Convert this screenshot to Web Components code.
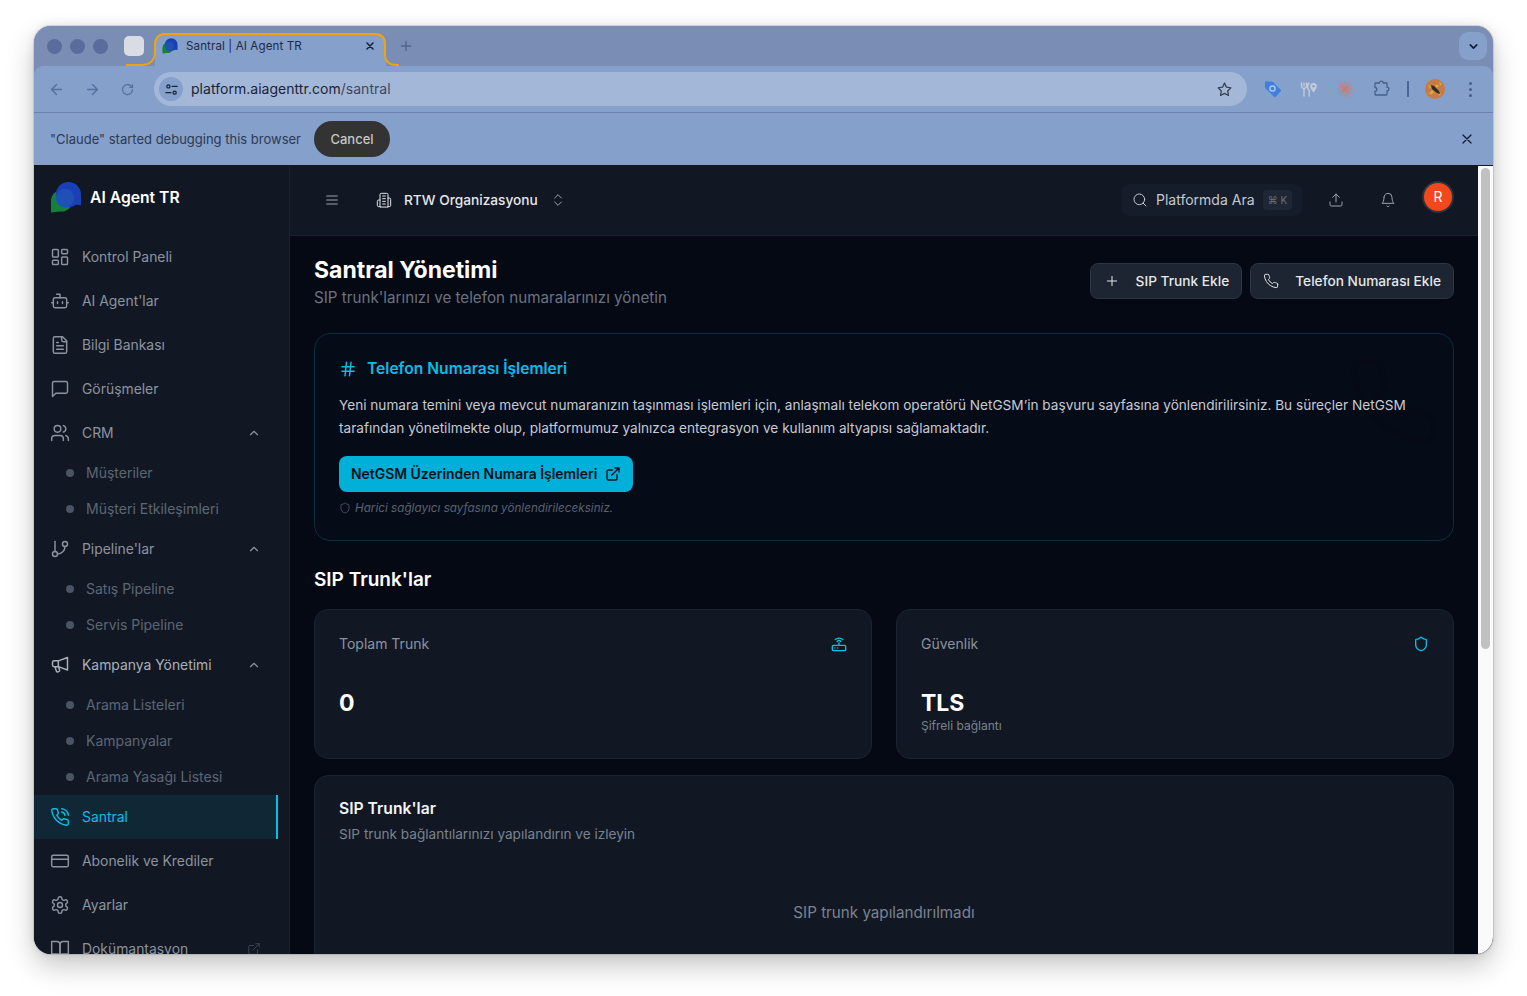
<!DOCTYPE html>
<html lang="tr">
<head>
<meta charset="utf-8">
<title>Santral | AI Agent TR</title>
<style>
    html, body { margin: 0; height: 100%; background: #fff; overflow: hidden; }
    body { padding: 26px 34px 42px; box-sizing: border-box; font-family: Inter, "Liberation Sans", sans-serif; }
</style>
</head>
<body>
<browser-window>
    <browser-tabs></browser-tabs>
    <browser-toolbar></browser-toolbar>
    <debug-bar></debug-bar>
    <app-shell>
        <app-sidebar slot="side">
            <nav-item icon="dashboard">Kontrol Paneli</nav-item>
            <nav-item icon="bot">AI Agent'lar</nav-item>
            <nav-item icon="file">Bilgi Bankası</nav-item>
            <nav-item icon="message">Görüşmeler</nav-item>
            <nav-item icon="users" trail="chevron">CRM</nav-item>
            <sub-item>Müşteriler</sub-item>
            <sub-item>Müşteri Etkileşimleri</sub-item>
            <nav-item icon="branch" trail="chevron">Pipeline'lar</nav-item>
            <sub-item>Satış Pipeline</sub-item>
            <sub-item>Servis Pipeline</sub-item>
            <nav-item icon="megaphone" trail="chevron" hover>Kampanya Yönetimi</nav-item>
            <sub-item>Arama Listeleri</sub-item>
            <sub-item>Kampanyalar</sub-item>
            <sub-item>Arama Yasağı Listesi</sub-item>
            <nav-item icon="phonecall" active>Santral</nav-item>
            <nav-item icon="card">Abonelik ve Krediler</nav-item>
            <nav-item icon="gear">Ayarlar</nav-item>
            <nav-item icon="book" trail="external">Dokümantasyon</nav-item>
        </app-sidebar>
        <app-header slot="head"></app-header>
        <santral-page></santral-page>
    </app-shell>
</browser-window>

<script>
// lucide style strokes, keyed by name
const ICONS = {
    dashboard: '<rect x="3" y="3" width="7" height="9" rx="1"/><rect x="14" y="3" width="7" height="5" rx="1"/><rect x="14" y="12" width="7" height="9" rx="1"/><rect x="3" y="16" width="7" height="5" rx="1"/>',
    bot: '<path d="M12 8V4H8"/><rect width="16" height="12" x="4" y="8" rx="2"/><path d="M2 14h2M20 14h2M15 13v2M9 13v2"/>',
    file: '<path d="M15 2H6a2 2 0 0 0-2 2v16a2 2 0 0 0 2 2h12a2 2 0 0 0 2-2V7Z"/><path d="M14 2v4a2 2 0 0 0 2 2h4"/><path d="M10 9H8M16 13H8M16 17H8"/>',
    message: '<path d="M21 15a2 2 0 0 1-2 2H7l-4 4V5a2 2 0 0 1 2-2h14a2 2 0 0 1 2 2z"/>',
    users: '<path d="M16 21v-2a4 4 0 0 0-4-4H6a4 4 0 0 0-4 4v2"/><circle cx="9" cy="7" r="4"/><path d="M22 21v-2a4 4 0 0 0-3-3.87M16 3.13a4 4 0 0 1 0 7.75"/>',
    branch: '<path d="M6 3v12"/><circle cx="18" cy="6" r="3"/><circle cx="6" cy="18" r="3"/><path d="M18 9a9 9 0 0 1-9 9"/>',
    megaphone: '<path d="M21 3 10 7H5a2 2 0 0 0-2 2v3a2 2 0 0 0 2 2h5l11 4z"/><path d="M10 7v7"/><path d="m6 14 1.6 5.2a1.5 1.5 0 0 0 1.9 1l1-.3a1.5 1.5 0 0 0 1-1.9L10.500 15"/>',
    phonecall: '<path d="M22 16.920v3a2 2 0 0 1-2.180 2 19.790 19.790 0 0 1-8.630-3.070 19.500 19.500 0 0 1-6-6 19.790 19.790 0 0 1-3.070-8.670A2 2 0 0 1 4.110 2h3a2 2 0 0 1 2 1.720 12.840 12.840 0 0 0 .7 2.810 2 2 0 0 1-.45 2.110L8.090 9.910a16 16 0 0 0 6 6l1.270-1.270a2 2 0 0 1 2.110-.45 12.840 12.840 0 0 0 2.810.7A2 2 0 0 1 22 16.920z"/><path d="M14.050 2a9 9 0 0 1 8 7.940M14.050 6A5 5 0 0 1 18 10"/>',
    phone: '<path d="M22 16.920v3a2 2 0 0 1-2.180 2 19.790 19.790 0 0 1-8.630-3.070 19.500 19.500 0 0 1-6-6 19.790 19.790 0 0 1-3.070-8.670A2 2 0 0 1 4.110 2h3a2 2 0 0 1 2 1.720 12.840 12.840 0 0 0 .7 2.810 2 2 0 0 1-.45 2.110L8.090 9.910a16 16 0 0 0 6 6l1.270-1.270a2 2 0 0 1 2.110-.45 12.840 12.840 0 0 0 2.810.7A2 2 0 0 1 22 16.92z"/>',
    card: '<rect width="20" height="14" x="2" y="5" rx="2"/><path d="M2 10h20"/>',
    gear: '<path d="M12.220 2h-.44a2 2 0 0 0-2 2v.18a2 2 0 0 1-1 1.730l-.43.25a2 2 0 0 1-2 0l-.15-.08a2 2 0 0 0-2.730.73l-.22.38a2 2 0 0 0 .73 2.730l.15.1a2 2 0 0 1 1 1.720v.51a2 2 0 0 1-1 1.740l-.15.09a2 2 0 0 0-.73 2.730l.22.38a2 2 0 0 0 2.730.73l.15-.08a2 2 0 0 1 2 0l.43.25a2 2 0 0 1 1 1.730V20a2 2 0 0 0 2 2h.44a2 2 0 0 0 2-2v-.18a2 2 0 0 1 1-1.730l.43-.25a2 2 0 0 1 2 0l.15.08a2 2 0 0 0 2.730-.73l.22-.39a2 2 0 0 0-.73-2.730l-.15-.08a2 2 0 0 1-1-1.740v-.5a2 2 0 0 1 1-1.740l.15-.09a2 2 0 0 0 .73-2.730l-.22-.38a2 2 0 0 0-2.730-.73l-.15.08a2 2 0 0 1-2 0l-.43-.25a2 2 0 0 1-1-1.730V4a2 2 0 0 0-2-2z"/><circle cx="12" cy="12" r="3"/>',
    book: '<path d="M2 3h6a4 4 0 0 1 4 4v14a3 3 0 0 0-3-3H2z"/><path d="M22 3h-6a4 4 0 0 0-4 4v14a3 3 0 0 1 3-3h7z"/>',
    external: '<path d="M15 3h6v6M10 14 21 3"/><path d="M18 13v6a2 2 0 0 1-2 2H5a2 2 0 0 1-2-2V8a2 2 0 0 1 2-2h6"/>',
    chevron: '<path d="m18 15-6-6-6 6"/>',
    updown: '<path d="m7 15 5 5 5-5M7 9l5-5 5 5"/>',
    menu: '<path d="M4 6h16M4 12h16M4 18h16"/>',
    building: '<path d="M6 22V4a2 2 0 0 1 2-2h8a2 2 0 0 1 2 2v18Z"/><path d="M6 12H4a2 2 0 0 0-2 2v6a2 2 0 0 0 2 2h2M18 9h2a2 2 0 0 1 2 2v9a2 2 0 0 1-2 2h-2M10 6h4M10 10h4M10 14h4M10 18h4"/>',
    search: '<circle cx="11" cy="11" r="8"/><path d="m21 21-4.300-4.300"/>',
    upload: '<path d="M21 15v4a2 2 0 0 1-2 2H5a2 2 0 0 1-2-2v-4"/><path d="m17 8-5-5-5 5M12 3v12"/>',
    bell: '<path d="M6 8a6 6 0 0 1 12 0c0 7 3 9 3 9H3s3-2 3-9"/><path d="M10.300 21a1.940 1.940 0 0 0 3.400 0"/>',
    hash: '<path d="M4 9h16M4 15h16M10 3 8 21M16 3l-2 18"/>',
    plus: '<path d="M5 12h14M12 5v14"/>',
    shield: '<path d="M20 13c0 5-3.500 7.500-7.660 8.950a1 1 0 0 1-.67-.01C7.500 20.500 4 18 4 13V6a1 1 0 0 1 1-1c2 0 4.500-1.200 6.240-2.720a1.170 1.170 0 0 1 1.520 0C14.510 3.810 17 5 19 5a1 1 0 0 1 1 1z"/>',
    router: '<rect x="2" y="14" width="20" height="8" rx="1.500"/><path d="M6 18h.01M10 18h.01M12 10v4"/><path d="M9.200 8.200a4 4 0 0 1 5.600 0M6.400 5.400a8 8 0 0 1 11.200 0"/>',
    close: '<path d="M18 6 6 18M6 6l12 12"/>',
    back: '<path d="m12 19-7-7 7-7M19 12H5"/>',
    forward: '<path d="M5 12h14M12 5l7 7-7 7"/>',
    reload: '<path d="M20 12a8 8 0 1 1-2.400-5.700L20 8.500"/><path d="M20 4v4.500h-4.500"/>',
    star: '<path d="m12 3 2.800 5.800 6.200.9-4.500 4.400 1.100 6.300L12 17.400l-5.600 3 1.100-6.300L3 9.700l6.200-.9z"/>',
    tune: '<circle cx="7" cy="7" r="2.500"/><path d="M13 7h8M3 17h8"/><circle cx="17" cy="17" r="2.500"/>',
    puzzle: '<path d="M5 4h5a2.500 2.500 0 0 1 5 0h4a1 1 0 0 1 1 1v4.500a2.500 2.500 0 0 1 0 5V19a1 1 0 0 1-1 1H5a1 1 0 0 1-1-1v-4a2.500 2.500 0 0 0 0-5V5a1 1 0 0 1 1-1z"/>'
};

class UiIcon extends HTMLElement {
    connectedCallback() {
        const size = this.getAttribute('size') || 20;
        const w = this.getAttribute('stroke') || 1.5;
        this.attachShadow({mode: 'open'}).innerHTML = `
            <style>:host{display:inline-flex;flex:none;width:${size}px;height:${size}px} svg{display:block}</style>
            <svg width="${size}" height="${size}" viewBox="0 0 24 24" fill="none" stroke="currentColor" stroke-width="${w}" stroke-linecap="round" stroke-linejoin="round">${ICONS[this.getAttribute('name')] || ''}</svg>`;
    }
}
customElements.define('ui-icon', UiIcon);

const BUBBLES = `<circle cx="12" cy="20" r="11" fill="#14803c"/><path d="M1 21v11l9-1z" fill="#14803c"/><circle cx="19" cy="13.500" r="13" fill="#1b3fb4"/><path d="M32 15v9.500l-9-1z" fill="#1b3fb4"/><circle cx="15.500" cy="17" r="9.500" fill="#1f50b8"/>`;

class BrowserWindow extends HTMLElement {
    connectedCallback() {
        this.attachShadow({mode: 'open'}).innerHTML = `
            <style>
                :host { display: flex; flex-direction: column; height: 928px; border-radius: 17px; overflow: hidden;
                        background: #7a8db5; box-shadow: 0 0 0 1px rgba(0,0,0,.10), 0 12px 28px rgba(0,0,0,.22), 0 0 10px rgba(0,0,0,.10); }
            </style>
            <slot></slot>`;
    }
}

class BrowserTabs extends HTMLElement {
    connectedCallback() {
        this.attachShadow({mode: 'open'}).innerHTML = `
            <style>
                :host { display: flex; align-items: center; height: 40px; background: #7a8db5; padding-left: 13px; padding-right: 6px; flex: none; font-size: 11.600px; }
                .lights { display: flex; gap: 8px; }
                .lights i { width: 15px; height: 15px; border-radius: 50%; background: #5a6c9c; }
                .blank { width: 20px; height: 20px; border-radius: 5px; background: #d9dce2; margin-left: 16px; }
                .tab { position: relative; align-self: flex-end; width: 231px; height: 33px; margin-left: 11px; background: #84a0cb; border-radius: 9px 9px 0 0;
                       display: flex; align-items: center; box-sizing: border-box; padding: 0 10px 7px 7px; color: #1f2b45; }
                .tab svg.line { position: absolute; left: -29px; top: 0; overflow: visible; }
                .tab span { flex: 1; margin-left: 8px; margin-bottom: 1px; white-space: nowrap; letter-spacing: .1px; }
                .tab ui-icon { color: #16223b; }
                .plus { color: #51648f; margin-left: 12px; }
                .menu { margin-left: auto; width: 28px; height: 28px; border-radius: 9px; background: #84a0cb; display: flex; align-items: center; justify-content: center; color: #121c33; }
            </style>
            <div class="lights"><i></i><i></i><i></i></div>
            <div class="blank"></div>
            <div class="tab">
                <svg class="line" width="273" height="33" fill="none" stroke="#f2a20c" stroke-width="2"><path d="M0 32h15c9 0 14-5 14-13V11C29 5 33 1 39 1h210c6 0 10 4 10 10v10c0 7 4 11 12 11h2"/></svg>
                <svg width="16" height="16" viewBox="0 0 33 33" style="flex:none">${BUBBLES}</svg>
                <span>Santral | AI Agent TR</span>
                <ui-icon name="close" size="12" stroke="3"></ui-icon>
            </div>
            <ui-icon class="plus" name="plus" size="16" stroke="2"></ui-icon>
            <div class="menu"><ui-icon name="chevron" size="13" stroke="3" style="transform:rotate(180deg)"></ui-icon></div>`;
    }
}

class BrowserToolbar extends HTMLElement {
    connectedCallback() {
        this.attachShadow({mode: 'open'}).innerHTML = `
            <style>
                :host { display: flex; align-items: center; height: 46px; flex: none; background: #84a0cb; border-radius: 9px 9px 0 0; border-bottom: 1px solid #6a82ac; padding-left: 14px; color: #56709f; }
                .nav { display: flex; gap: 19px; align-items: center; }
                .omni { display: flex; align-items: center; width: 1093px; height: 34px; margin-left: 19px; border-radius: 17px; background: #a3b7d9; box-sizing: border-box; padding: 0 14px 0 5px; color: #1b2435; font-size: 14px; letter-spacing: .03px; }
                .omni span { margin-bottom: 2px; }
                .site { width: 24px; height: 24px; border-radius: 50%; background: #84a0cb; display: flex; align-items: center; justify-content: center; margin-right: 8px; color: #1b2435; }
                .omni em { font-style: normal; color: #3b4861; }
                .omni ui-icon.star { margin-left: auto; color: #3a3f4c; }
                .exts { display: flex; align-items: center; margin-left: 17px; }
                .exts svg.e { margin-right: 18px; flex: none; }
                .sep { width: 2px; height: 16px; background: #4a669b; margin-left: 17px; }
                .avatar { margin-left: 16px; flex: none; display: block; }
                .kebab { margin-left: 24px; display: flex; flex-direction: column; gap: 3px; }
                .kebab i { width: 3px; height: 3px; border-radius: 50%; background: #4a5f8c; }
            </style>
            <div class="nav">
                <ui-icon name="back" size="17" stroke="2"></ui-icon>
                <ui-icon name="forward" size="17" stroke="2"></ui-icon>
                <ui-icon name="reload" size="15" stroke="2"></ui-icon>
            </div>
            <div class="omni">
                <div class="site"><ui-icon name="tune" size="15" stroke="2"></ui-icon></div>
                <span>platform.aiagenttr.com<em>/santral</em></span>
                <ui-icon class="star" name="star" size="17" stroke="1.800"></ui-icon>
            </div>
            <div class="exts">
                <svg class="e" width="18" height="18" viewBox="0 0 18 18"><path d="M1 1.500h6.500a2 2 0 0 1 1.500.6l7.500 7.400a1.500 1.500 0 0 1 0 2L12 16.500a1.500 1.500 0 0 1-2.100 0L2 8.800A2 2 0 0 1 1 7z" fill="#3f7fe0"/><circle cx="8.500" cy="8.500" r="2.600" fill="none" stroke="#a9c8f4" stroke-width="1.500"/></svg>
                <svg class="e" width="18" height="18" viewBox="0 0 18 18" fill="none" stroke="#c3cbd8" stroke-width="1.400" stroke-linecap="round"><path d="M1.500 3v3.500c0 1.500 2.500 2 2.500 2.500v7M4 3v3M6.500 3v3.500C6.500 8 4 8.500 4 9M9 3c-1.300 1.500-1.500 4-1 6l1.200 1V16"/><path d="M13.500 3a3.300 3.300 0 0 1 3.300 3.300c0 2.500-3.300 6.200-3.300 6.200s-3.300-3.700-3.300-6.200A3.300 3.300 0 0 1 13.500 3z" fill="#c3cbd8" stroke="none"/><circle cx="13.500" cy="6.300" r="1.200" fill="#84a0cb" stroke="none"/></svg>
                <svg class="e" width="18" height="18" viewBox="0 0 18 18" stroke="#d07a6c" stroke-width=".9"><path d="M9 1v16M1 9h16M3.300 3.300l11.400 11.400M14.700 3.300 3.300 14.700M5.500 1.800l7 14.400M12.500 1.800l-7 14.400M1.800 5.500l14.400 7M16.200 5.500l-14.400 7"/></svg>
                <ui-icon name="puzzle" size="18" stroke="1.700" style="color:#41608f"></ui-icon>
                <div class="sep"></div>
                <svg class="avatar" width="20" height="20" viewBox="0 0 20 20"><circle cx="10" cy="10" r="10" fill="#c87b45"/><path d="M3 6l3 1-1 3zM14 3l3 2-2 2zM3 14l3-1 1 3zM13 15l3-1-1 3z" fill="#d6a63a"/><path d="M6 6l3 1 5 5 1 3-3-1-5-4z" fill="#2f2c28"/><circle cx="12" cy="7" r="1.500" fill="#d6b33a"/><circle cx="7" cy="13" r="1.500" fill="#d6b33a"/></svg>
                <div class="kebab"><i></i><i></i><i></i></div>
            </div>`;
    }
}

class DebugBar extends HTMLElement {
    connectedCallback() {
        this.attachShadow({mode: 'open'}).innerHTML = `
            <style>
                :host { display: flex; align-items: center; height: 52px; flex: none; background: #84a0cb; padding: 0 18px 0 16px; color: #2d3a52; font-size: 13px; }
                button { all: unset; margin-left: 13px; width: 76px; height: 36px; border-radius: 18px; background: #333; color: #c6c6c6; text-align: center; font-weight: 500; font-family: inherit; font-size: 13px; }
                ui-icon { margin-left: auto; color: #152139; }
            </style>
            <span>"Claude" started debugging this browser</span>
            <button>Cancel</button>
            <ui-icon name="close" size="16" stroke="2"></ui-icon>`;
    }
}

class AppShell extends HTMLElement {
    connectedCallback() {
        this.attachShadow({mode: 'open'}).innerHTML = `
            <style>
                :host { display: flex; flex: 1; min-height: 0; border-top: 1px solid #16181f; background: #050914; }
                .side { flex: none; width: 256px; display: flex; }
                .right { flex: 1; min-width: 0; display: flex; flex-direction: column; }
                .scroll { flex: none; width: 15px; background: #fafafa; position: relative; }
                .scroll i { position: absolute; left: 3px; top: 2px; width: 9px; height: 481px; border-radius: 5px; background: #c1c1c1; }
            </style>
            <div class="side"><slot name="side"></slot></div>
            <div class="right"><slot name="head"></slot><slot></slot></div>
            <div class="scroll"><i></i></div>`;
    }
}

class AppSidebar extends HTMLElement {
    connectedCallback() {
        this.attachShadow({mode: 'open'}).innerHTML = `
            <style>
                :host { display: block; width: 100%; background: #111824; border-right: 1px solid #1b2230; box-sizing: border-box; overflow: hidden; font-family: Inter, "Liberation Sans", sans-serif; }
                .brand { display: flex; align-items: center; height: 69px; padding: 0 0 7px 16px; box-sizing: border-box; gap: 8px; color: #fff; font-size: 15.700px; font-weight: 600; }
                nav { display: flex; flex-direction: column; width: 244px; }
            </style>
            <div class="brand"><svg width="32" height="33" viewBox="0 0 33 33">${BUBBLES}</svg><span>AI Agent TR</span></div>
            <nav><slot></slot></nav>`;
    }
}

class NavItem extends HTMLElement {
    connectedCallback() {
        const active = this.hasAttribute('active');
        const trail = this.getAttribute('trail');
        const color = active ? '#06bfe6' : this.hasAttribute('hover') ? '#aab0bb' : '#8c939f';
        this.attachShadow({mode: 'open'}).innerHTML = `
            <style>
                :host { display: flex; align-items: center; height: 44px; flex: none; gap: 12px; padding: 0 17px 0 16px; box-sizing: border-box; font-size: 13.900px; color: ${color};
                        ${active ? 'background:#102735; border-right:2px solid #06bfe6;' : ''} }
                .t { flex: 1; white-space: nowrap; margin-bottom: 1px; }
                .c { color: #8c939f; }
                .e { color: #414a57; }
            </style>
            <ui-icon name="${this.getAttribute('icon')}" size="20" stroke="1.750"></ui-icon>
            <span class="t"><slot></slot></span>
            ${trail === 'chevron' ? '<ui-icon class="c" name="chevron" size="14" stroke="2"></ui-icon>' : ''}
            ${trail === 'external' ? '<ui-icon class="e" name="external" size="14"></ui-icon>' : ''}`;
    }
}

class SubItem extends HTMLElement {
    connectedCallback() {
        this.attachShadow({mode: 'open'}).innerHTML = `
            <style>
                :host { display: flex; align-items: center; height: 36px; flex: none; gap: 12px; padding-left: 32px; font-size: 14px; color: #5d6673; white-space: nowrap; }
                i { width: 8px; height: 8px; border-radius: 50%; background: #4a5463; }
                span { margin-bottom: 1px; }
            </style>
            <i></i><span><slot></slot></span>`;
    }
}

class AppHeader extends HTMLElement {
    connectedCallback() {
        this.attachShadow({mode: 'open'}).innerHTML = `
            <style>
                :host { display: flex; align-items: center; height: 70px; flex: none; box-sizing: border-box; border-bottom: 1px solid #1b2330; background: #111824; padding: 0 26px 1px 34px; color: #9ca3af; font-size: 14px; }
                .org { display: flex; align-items: center; margin-left: 36px; color: #e5e7eb; font-weight: 500; font-size: 13.700px; }
                .org span { margin: 0 12px; }
                .org ui-icon:last-child { color: #9ca3af; }
                .search { display: flex; align-items: center; margin-left: auto; width: 180px; height: 32px; border-radius: 8px; background: #161d2a; box-sizing: border-box; padding: 0 10px; gap: 8px; color: #c5c9d1; }
                .search span { margin-bottom: 1px; }
                kbd { margin-left: auto; height: 20px; width: 29px; border-radius: 4px; background: #1e2733; color: #667080; font: 10px Inter, sans-serif; display: flex; align-items: center; justify-content: center; }
                .act { margin-left: 26px; }
                .bell { margin-left: 36px; }
                .user { margin-left: 28px; margin-bottom: 7px; width: 28px; height: 28px; border-radius: 50%; background: #f4481c; box-shadow: 0 0 0 2px #2a3342; color: #fff; display: flex; align-items: center; justify-content: center; }
            </style>
            <ui-icon name="menu" size="16"></ui-icon>
            <div class="org"><ui-icon name="building" size="16"></ui-icon><span>RTW Organizasyonu</span><ui-icon name="updown" size="16"></ui-icon></div>
            <div class="search"><ui-icon name="search" size="16"></ui-icon><span>Platformda Ara</span><kbd>⌘ K</kbd></div>
            <ui-icon class="act" name="upload" size="16"></ui-icon>
            <ui-icon class="bell" name="bell" size="16"></ui-icon>
            <div class="user">R</div>`;
    }
}

class GhostButton extends HTMLElement {
    connectedCallback() {
        this.attachShadow({mode: 'open'}).innerHTML = `
            <style>
                :host { display: inline-flex; align-items: center; height: 36px; box-sizing: border-box; padding: 0 12px; gap: 16px; border: 1px solid #2c3644; border-radius: 8px; background: #1c2531; color: #e5e7eb; font-size: 13.700px; font-weight: 500; white-space: nowrap; }
                span { margin-bottom: 1px; }
            </style>
            <ui-icon name="${this.getAttribute('icon')}" size="16"></ui-icon><span><slot></slot></span>`;
    }
}

class StatCard extends HTMLElement {
    connectedCallback() {
        const note = this.getAttribute('note');
        this.attachShadow({mode: 'open'}).innerHTML = `
            <style>
                :host { display: block; height: 150px; box-sizing: border-box; border: 1px solid #1b2330; border-radius: 14px; background: #111824; padding: 24px; }
                .top { display: flex; justify-content: space-between; align-items: center; height: 20px; color: #8c939f; font-size: 14px; }
                .top span { margin-bottom: 2px; }
                .top ui-icon { color: #06bfe6; }
                .v { margin-top: 33px; font-size: 23px; line-height: 32px; font-weight: 700; color: #fff; }
                .n { font-size: 12px; line-height: 14px; color: #7b828e; }
            </style>
            <div class="top"><span><slot name="label"></slot></span><ui-icon name="${this.getAttribute('icon')}" size="16" stroke="2"></ui-icon></div>
            <div class="v"><slot></slot></div>
            ${note ? `<div class="n">${note}</div>` : ''}`;
    }
}

class SantralPage extends HTMLElement {
    connectedCallback() {
        this.attachShadow({mode: 'open'}).innerHTML = `
            <style>
                :host { display: block; flex: 1; min-height: 0; overflow: hidden; padding: 24px 24px 0; background: #050914; font-family: Inter, "Liberation Sans", sans-serif; }
                .head { display: flex; justify-content: space-between; align-items: flex-start; }
                h1 { margin: 0; font-size: 23px; line-height: 20px; font-weight: 700; color: #fff; }
                .head p { margin: 6px 0 0; font-size: 15.200px; line-height: 24px; color: #6b7280; }
                .btns { display: flex; gap: 8px; margin-top: 3px; }
                .btns ghost-button:first-child { padding-left: 13px; }
                .info { position: relative; margin-top: 23px; height: 208px; box-sizing: border-box; border: 1px solid #0e2c3c; border-radius: 16px; background: #060b18; padding: 24px; overflow: hidden; }
                .ghost { position: absolute; left: 1030px; top: 20px; color: #050a16; z-index: 0; }
                .info > :not(.ghost) { position: relative; }
                h2 { display: flex; align-items: center; gap: 10px; margin: 1px 0 0; font-size: 15.600px; line-height: 20px; font-weight: 600; color: #06bfe6; }
                .info p { margin: 15px 0 0; font-size: 13.620px; line-height: 23px; color: #c5cad3; }
                .cta { display: inline-flex; align-items: center; gap: 8px; height: 36px; margin-top: 16px; padding: 0 12px; border-radius: 8px; background: #00b0d8; color: #04111c; font-size: 13.950px; font-weight: 600; }
                .cta span { margin-bottom: 1px; }
                .hint { display: flex; align-items: center; gap: 4px; margin-top: 9px; font-size: 11.700px; line-height: 14px; font-style: italic; color: #59626f; }
                h3 { margin: 26px 0 16px; font-size: 19px; line-height: 26px; font-weight: 600; color: #fff; }
                .stats { display: grid; grid-template-columns: 1fr 1fr; gap: 24px; }
                .list { margin-top: 16px; height: 300px; box-sizing: border-box; border: 1px solid #1b2330; border-radius: 14px; background: #111824; padding: 23px 24px; }
                .list h4 { margin: 0; font-size: 15.700px; line-height: 20px; font-weight: 600; color: #f3f4f6; }
                .list p { margin: 5px 0 0; font-size: 13.600px; line-height: 20px; color: #7b828e; }
                .list .empty { margin-top: 57px; text-align: center; font-size: 15.200px; line-height: 24px; color: #7b828e; }
            </style>
            <div class="head">
                <div><h1>Santral Yönetimi</h1><p>SIP trunk'larınızı ve telefon numaralarınızı yönetin</p></div>
                <div class="btns">
                    <ghost-button icon="plus">SIP Trunk Ekle</ghost-button>
                    <ghost-button icon="phone">Telefon Numarası Ekle</ghost-button>
                </div>
            </div>
            <section class="info">
                <ui-icon class="ghost" name="phone" size="96"></ui-icon>
                <h2><ui-icon name="hash" size="18" stroke="2"></ui-icon>Telefon Numarası İşlemleri</h2>
                <p>Yeni numara temini veya mevcut numaranızın taşınması işlemleri için, anlaşmalı telekom operatörü NetGSM’in başvuru sayfasına yönlendirilirsiniz. Bu süreçler NetGSM tarafından yönetilmekte olup, platformumuz yalnızca entegrasyon ve kullanım altyapısı sağlamaktadır.</p>
                <div class="cta"><span>NetGSM Üzerinden Numara İşlemleri</span><ui-icon name="external" size="16" stroke="2"></ui-icon></div>
                <div class="hint"><ui-icon name="shield" size="12"></ui-icon>Harici sağlayıcı sayfasına yönlendirileceksiniz.</div>
            </section>
            <h3>SIP Trunk'lar</h3>
            <div class="stats">
                <stat-card icon="router"><span slot="label">Toplam Trunk</span>0</stat-card>
                <stat-card icon="shield" note="Şifreli bağlantı"><span slot="label">Güvenlik</span>TLS</stat-card>
            </div>
            <section class="list">
                <h4>SIP Trunk'lar</h4>
                <p>SIP trunk bağlantılarınızı yapılandırın ve izleyin</p>
                <div class="empty">SIP trunk yapılandırılmadı</div>
            </section>`;
    }
}

customElements.define('browser-window', BrowserWindow);
customElements.define('browser-tabs', BrowserTabs);
customElements.define('browser-toolbar', BrowserToolbar);
customElements.define('debug-bar', DebugBar);
customElements.define('app-shell', AppShell);
customElements.define('app-sidebar', AppSidebar);
customElements.define('nav-item', NavItem);
customElements.define('sub-item', SubItem);
customElements.define('app-header', AppHeader);
customElements.define('ghost-button', GhostButton);
customElements.define('stat-card', StatCard);
customElements.define('santral-page', SantralPage);
</script>
</body>
</html>
